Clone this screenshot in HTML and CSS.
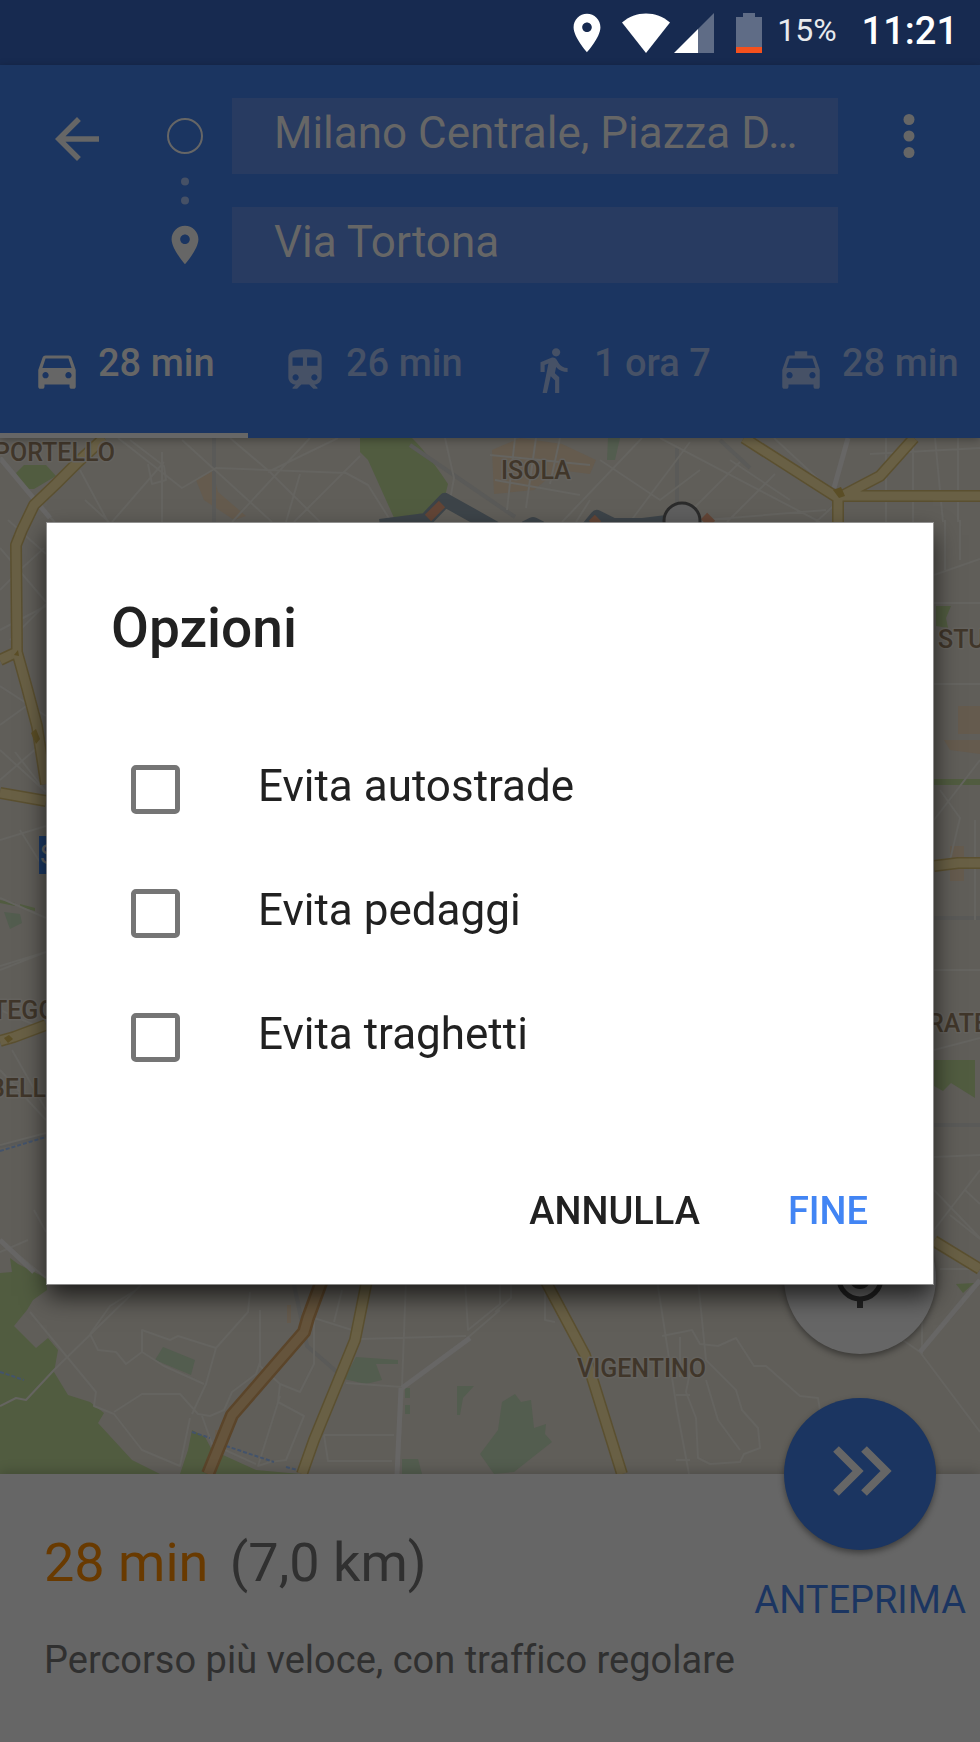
FILE: index.html
```
<!doctype html>
<html lang="it">
    <head>
        <meta charset="utf-8">
        <meta name="viewport" content="width=device-width, initial-scale=1">
        <title>Opzioni</title>
        <link rel="stylesheet" href="styles.css">
    </head>
    <body>
        <div class="app">
            <div class="statusBar">
                <svg class="statusPin" viewBox="0 0 24 24"><path d="M12 2C8.13 2 5 5.13 5 9c0 5.25 7 13 7 13s7-7.75 7-13c0-3.87-3.13-7-7-7zm0 9.5c-1.38 0-2.5-1.12-2.5-2.5s1.12-2.5 2.5-2.5 2.500 1.120 2.500 2.500-1.120 2.500-2.500 2.500z"/></svg>
                <svg class="wifi" viewBox="0 0 48 40"><path d="M24 40L0 9.500C7 3.500 15 .5 24 .5s17 3 24 9z"/></svg>
                <svg class="signal" viewBox="0 0 40 40"><path class="faded" d="M40 0v40H24V16z"/><path d="M24 16v24H0z"/></svg>
                <svg class="battery" viewBox="0 0 26 40"><path class="faded" d="M7 0h12v4h7v30H0V4h7z"/><path class="low" d="M0 34h26v6H0z"/></svg>
                <span class="percent">15%</span>
                <span class="clock">11:21</span>
            </div>

            <header class="header">
                <div class="route">
                    <button class="iconButton back" aria-label="Indietro">
                        <svg viewBox="0 0 24 24"><path d="M20 11H7.83l5.590-5.590L12 4l-8 8 8 8 1.410-1.410L7.830 13H20v-2z"/></svg>
                    </button>
                    <svg class="origin" viewBox="0 0 36 36"><circle cx="18" cy="18" r="17"/></svg>
                    <input class="field" type="text" aria-label="Partenza" value="Milano Centrale, Piazza D…">
                    <button class="iconButton" aria-label="Altre opzioni">
                        <svg viewBox="0 0 24 24"><circle cx="12" cy="6" r="2"/><circle cx="12" cy="12" r="2"/><circle cx="12" cy="18" r="2"/></svg>
                    </button>
                    <svg class="dots" viewBox="0 0 10 28"><circle cx="5" cy="4.500" r="4"/><circle cx="5" cy="23.500" r="4"/></svg>
                    <svg class="destination" viewBox="0 0 24 24"><path d="M12 2C8.130 2 5 5.130 5 9c0 5.250 7 13 7 13s7-7.750 7-13c0-3.870-3.130-7-7-7zm0 9.500c-1.380 0-2.500-1.120-2.500-2.500s1.120-2.500 2.500-2.500 2.500 1.120 2.500 2.500-1.120 2.500-2.500 2.500z"/></svg>
                    <input class="field second" type="text" aria-label="Destinazione" value="Via Tortona">
                </div>

                <nav class="tabs">
                    <a class="tab active" href="#auto">
                        <svg viewBox="0 0 24 24"><path d="M18.92 6.01C18.72 5.42 18.16 5 17.5 5h-11c-.66 0-1.21.42-1.42 1.01L3 12v8c0 .55.45 1 1 1h1c.55 0 1-.45 1-1v-1h12v1c0 .55.45 1 1 1h1c.55 0 1-.45 1-1v-8l-2.08-5.99zM6.5 16c-.83 0-1.5-.67-1.5-1.5S5.67 13 6.5 13s1.5.67 1.5 1.5S7.33 16 6.5 16zm11 0c-.83 0-1.5-.67-1.5-1.5s.67-1.5 1.5-1.5 1.5.67 1.5 1.5-.67 1.5-1.5 1.5zM5 11l1.500-4.500h11L19 11H5z"/></svg>
                        <span>28 min</span>
                    </a>
                    <a class="tab" href="#mezzi">
                        <svg viewBox="0 0 24 24"><path d="M12 2c-4 0-8 .5-8 4v9.500C4 17.430 5.570 19 7.500 19L6 20.500v.5h2.230l2-2H14l2 2h2v-.5L16.500 19c1.930 0 3.500-1.570 3.500-3.500V6c0-3.500-3.580-4-8-4zM7.500 17c-.83 0-1.500-.67-1.500-1.500S6.670 14 7.500 14s1.500.67 1.500 1.500S8.330 17 7.500 17zm3.500-7H6V6h5v4zm2 0V6h5v4h-5zm3.500 7c-.83 0-1.500-.67-1.500-1.500s.67-1.500 1.500-1.500 1.500.67 1.500 1.500-.67 1.500-1.500 1.500z"/></svg>
                        <span>26 min</span>
                    </a>
                    <a class="tab" href="#piedi">
                        <svg viewBox="0 0 24 24"><path d="M13.500 5.500c1.100 0 2-.9 2-2s-.9-2-2-2-2 .9-2 2 .9 2 2 2zM9.800 8.900L7 23h2.100l1.800-8 2.100 2v6h2v-7.500l-2.100-2 .6-3C14.800 12 16.800 13 19 13v-2c-1.900 0-3.500-1-4.300-2.400l-1-1.600c-.4-.6-1-1-1.700-1-.3 0-.5.1-.8.1L6 8.300V13h2V9.600l1.800-.7"/></svg>
                        <span>1 ora 7</span>
                    </a>
                    <a class="tab" href="#taxi">
                        <svg viewBox="0 0 24 24"><path d="M18.920 6.010C18.720 5.420 18.160 5 17.500 5H15V3H9v2H6.500c-.66 0-1.210.42-1.420 1.010L3 12v8c0 .55.45 1 1 1h1c.55 0 1-.45 1-1v-1h12v1c0 .55.45 1 1 1h1c.55 0 1-.45 1-1v-8l-2.080-5.990zM6.500 16c-.83 0-1.500-.67-1.500-1.500S5.670 13 6.500 13s1.500.67 1.500 1.500S7.330 16 6.500 16zm11 0c-.83 0-1.500-.67-1.500-1.500s.67-1.500 1.500-1.500 1.500.67 1.500 1.500-.67 1.500-1.500 1.500zM5 11l1.500-4.500h11L19 11H5z"/></svg>
                        <span>28 min</span>
                    </a>
                </nav>
            </header>

            <main class="map">
                <svg class="tiles" viewBox="0 438 980 1036" preserveAspectRatio="xMidYMid slice">
                    <!-- parks -->
                    <g class="park">
                        <path d="M16 473l8-8h22l10 11-22 13H25z"/>
                        <path d="M360 438h52c16 16 28 34 36 46l-3 12-15 24h-35l-27-60-8-8z"/>
                        <path d="M0 1273l12-1-2-14 8 6 28 14 1 12-14 10-6 10-13 16 22 22 12-10 10 12-4 22 14 23 22 7 14 11-6 10 34 37 28 14H0z"/>
                        <path d="M192 1430l13 7 7 13 44 20 44 4H180l8-24z"/>
                        <path d="M934 1060h41v38l-24-15-8 8-9-5zM936 606h15l-5 12 2 10-12-2zM956 1284l18-1-11 10z"/>
                        <path d="M934 779h46v6h-46zM0 900l15 3v3l-15-3zM20 904l15 4v3l-15-4z"/>
                    </g>
                    <g class="garden">
                        <path d="M163 1347l32 13-4 15-36-15zM356 1357l42 3v4h-22l6 16-16 4-22-5zM457 1386h17l-11 12-3 17h-3zM405 1388h5v10h-5zM405 1405h5v9h-5zM488 1455l12-18v36z"/>
                        <path d="M502 1402l13-8 6 8 10-2 3 28 12-4-1 10 7 8-38 30-20 2-14-20 18-24z"/>
                        <path d="M402 1459h16l4 15h-20zM608 438h12l-5 22h-8zM4 912l16 2 2 9-12 6z"/>
                    </g>
                    <!-- built-up blocks -->
                    <g class="block">
                        <path d="M492 450l28-12 42 6 34 16-6 14-32-4-24 20-40 4zM196 480l16-10 6 22 28 24-12 4-30-20z"/>
                        <path d="M958 706h22v28h-22zM944 740h36v14l-30-4zM950 846h14v35h-14zM287 1305h4v18h-4zM215 1430h9v18h-9z"/>
                    </g>
                    <path class="rail" d="M214 438v84M410 445l70 48M480 493l35 24M720 440l30 28M677 448l0 70M293 1280l14 66 30 26M0 1146l46-10M934 1125h46M934 918h46"/>
                    <!-- minor streets -->
                    <g class="street">
                        <path d="M0 458l46 54 10 12M118 438l64 50 34-20 130 5 22 12 24 38M164 462l-52 60M80 470l28 52M182 440l90 82M162 452v70M130 440l34 26 2 14-14 4-4-20M230 438l40 34 50 50M310 438l-78 84M360 456l-66 66M300 474l-14 48M268 472l70-34M85 500l24 22M445 438l9 40-4 22"/>
                        <path d="M490 455l100 10M515 438l-8 72M536 438l-10 70M495 480l85 15M560 438l-10 46M660 438l160 84M642 438l-80 84M690 442l-60 80M740 462l-60 60M775 474l-48 48M600 460l60 40 40-30M826 510l-120 10M848 438l-14 50M774 438l56 52M870 454l110-6M886 438v84M913 438v84M935 438l8 84M958 438v84M590 500l-14 22M790 500l-60-40M840 500l-24 22"/>
                        <path d="M0 548l46 54M8 520l38 34M0 590l20-20 24-22M0 630l46-24M10 640l36-36M0 686l46 30M0 725l36-26M0 780l46-40M0 750l46 42M15 752l31 40M0 840l46-14M0 970l46-18M20 830l26 42M0 898l46 20M0 966l46-14M12 1050l34 60M0 1070l46 50M0 1145l46-12M0 1010l46 20M34 1210l12 22"/>
                        <path d="M934 575l46-16M945 520v50M960 520v40M934 603h46M934 684h46M940 790l20 28-10 42M980 760l-46 60M975 820v100M934 970h46M934 1050l46-12M934 1157l46-2M934 1190l46 48M934 1230l46-60M950 1215l30 24M965 1190l15 14"/>
                        <path d="M0 1240l46 38M28 1240L0 1252M30 1312l66 80-2 14 20 8 28 36 38 16 10-48M0 1406l16-8 10 2 28-30 88-86M90 1334l20-28 26-16 10-10M142 1352v-22l28 10 8-4 38 12 32-36 2-20M90 1334l8 16 18 2 10 12 16-12 22 14 40 18M216 1348l-10 36-14 30M114 1412l28-18h38l18 20 12 2 14-6 8-18 24-18 4-12V1310M260 1316v50l20 18 20 8 14-28V1310M280 1384l-2 18 26 14-18 44-16 2-12 4 22-70M202 1416l10 28 44 20M314 1318l38 12M342 1290l-8 32"/>
                        <path d="M360 1339l106-3M346 1383l56 4M406 1280l-4 106M465 1280l3 50 32-26v-24M405 1385l60-45 35-30M403 1388l-5 86M324 1435h70M324 1435l4 26h64M495 1312l16-14V1280M545 1290v30l10 2"/>
                        <path d="M657 1280l20 130 12 64M662 1336l30-6 8 14 18 2 18-8 18 28h12l34 30 18 2 2 12M698 1280l8 80 30 30 6 20 16 18 2 20-16 6-4 8-30 2-12-6-2-40-10-26 4-20M706 1380l12 40 22 30M680 1337v40M690 1395h-14M676 1460h14"/>
                        <path d="M980 1282l-60 70-20-14M920 1352l60 80M922 1320v34M940 1269h40"/>
                    </g>
                    <path class="avenue" d="M0 458l50 60M402 1388l68-50M401 1388l-4 86M0 1240l34 32M920 1352l60-72M848 438l-14 50"/>
                    <path class="water" d="M192 1432l18 6M226 1446l48 16M286 1467l12 3M0 1372l24 8M0 1151l46-14"/>
                    <!-- main roads, casing first -->
                    <g class="casing">
                        <path d="M104 438l-26 24-22 22-22 21-12 25-6 15 1 107 10 36 10 38 9 58M0 660l17-8M0 793l46 8M0 1041l14-4 32-12M744 438l94 60 42-22 34-38M838 496h142M838 496v26M934 866l24-3h22M934 1241l46 28"/>
                        <path d="M367 1280l-12 60-41 100-12 34M545 1280l40 75 37 119"/>
                    </g>
                    <g class="road">
                        <path d="M104 438l-26 24-22 22-22 21-12 25-6 15 1 107 10 36 10 38 9 58M0 660l17-8M0 793l46 8M0 1041l14-4 32-12M744 438l94 60 42-22 34-38M838 496h142M838 496v26M934 866l24-3h22M934 1241l46 28"/>
                        <path d="M367 1280l-12 60-41 100-12 34M545 1280l40 75 37 119"/>
                    </g>
                    <path class="junction" d="M833 490l8-3 4 9-6 2zM31 733l5-4 4 10-4 5zM4 1038l5-3 4 4-5 4zM14 655l4-5 1 6z"/>
                    <path class="highwayCasing" d="M322 1280l-14 38-4 14-72 83-24 59"/>
                    <path class="highway" d="M322 1280l-14 38-4 14-72 83-24 59"/>
                    <!-- routes -->
                    <path class="routeLine" d="M380 526l46-6 19-20 50 28M525 528l8-4 8 4M588 528l9-11 16 8h30l32-4"/>
                    <path class="traffic" d="M428 518l14-14M592 524l6-6M704 516l8 8"/>
                    <circle class="marker" cx="682" cy="521" r="18"/>
                    <path class="station" d="M39 836h12v38H39z"/>
                    <text class="stationName" x="40" y="864">S</text>
                    <g class="placeNames">
                        <text x="-6" y="461">PORTELLO</text>
                        <text x="501" y="479">ISOLA</text>
                        <text x="938" y="648">STU</text>
                        <text x="-8" y="1019">TEGG</text>
                        <text x="-11" y="1097">BELL</text>
                        <text x="928" y="1032">RATE</text>
                        <text x="577" y="1377">VIGENTINO</text>
                    </g>
                </svg>
                <button class="fab locate" aria-label="La mia posizione">
                    <svg viewBox="0 0 64 64"><circle class="ring" cx="32" cy="32" r="21"/><circle cx="32" cy="32" r="11"/><path d="M29 2h6v9h-6zM29 53h6v9h-6zM2 29h9v6H2zM53 29h9v6h-9z"/></svg>
                </button>
            </main>

            <section class="sheet">
                <button class="fab preview" aria-labelledby="previewLabel">
                    <svg viewBox="0 0 64 56"><path d="M8 3l22 22L8 47M36 3l22 22-22 22"/></svg>
                </button>
                <div class="summary">
                    <p class="duration"><strong>28 min</strong> <span>(7,0 km)</span></p>
                    <a class="previewLabel" id="previewLabel" href="#anteprima">ANTEPRIMA</a>
                </div>
                <p class="note">Percorso più veloce, con traffico regolare</p>
            </section>
        </div>

        <div class="overlay">
            <form class="dialog" role="dialog" aria-labelledby="dialogTitle">
                <h1 id="dialogTitle">Opzioni</h1>
                <div class="options">
                    <div class="option"><input type="checkbox" id="autostrade"><label for="autostrade">Evita autostrade</label></div>
                    <div class="option"><input type="checkbox" id="pedaggi"><label for="pedaggi">Evita pedaggi</label></div>
                    <div class="option"><input type="checkbox" id="traghetti"><label for="traghetti">Evita traghetti</label></div>
                </div>
                <div class="actions">
                    <button type="button">ANNULLA</button>
                    <button type="button" class="primary">FINE</button>
                </div>
            </form>
        </div>
    </body>
</html>
```

FILE: styles.css
```
* {
    box-sizing: border-box;
}
body {
    margin: 0;
    font-family: Roboto, "Noto Sans", sans-serif;
    font-size: 38px;
    color: #303030;
    background-color: #666;
}
button {
    font: inherit;
    border: 0;
    background: none;
    padding: 0;
    cursor: pointer;
}
a {
    text-decoration: none;
}
p, h1 {
    margin: 0;
}
svg {
    display: block;
    flex-shrink: 0;
    fill: currentColor;
}

.app {
    display: flex;
    flex-direction: column;
    min-height: 100vh;
}

.statusBar {
    display: flex;
    align-items: center;
    justify-content: flex-end;
    height: 65px;
    padding: 0 22px 0 0;
    color: #fff;
    background-color: #172a50;
}
.statusPin {
    width: 46px;
    height: 46px;
    margin-right: 12px;
}
.wifi {
    width: 48px;
    height: 40px;
    margin-right: 4px;
}
.signal {
    width: 40px;
    height: 40px;
    margin-right: 22px;
}
.battery {
    width: 26px;
    height: 40px;
    margin-right: 15px;
}
.faded {
    fill: #5f6c86;
}
.low {
    fill: #f4511e;
}
.percent {
    font-size: 32px;
    padding-bottom: 6px;
    margin-right: 25px;
    color: #e8eaee;
}
.clock {
    font-weight: 500;
    padding-bottom: 4px;
}

.header {
    color: #666;
    background-color: #1b3561;
    position: relative;
    z-index: 1;
    box-shadow: 0 2px 8px rgba(0, 0, 0, 0.3);
}
.route {
    display: grid;
    grid-template-columns: 154px 62px 1fr 142px;
    grid-template-rows: 76px 33px 76px;
    align-items: center;
    justify-items: center;
    padding-top: 33px;
}
.iconButton {
    color: inherit;
}
.iconButton svg {
    width: 66px;
    height: 66px;
}
.back {
    padding-top: 6px;
}
.origin {
    width: 36px;
    height: 36px;
    fill: none;
    stroke: #666;
    stroke-width: 2;
}
.dots {
    grid-area: 2 / 2;
    width: 10px;
    height: 28px;
    color: #465166;
}
.destination {
    grid-area: 3 / 2;
    width: 46px;
    height: 46px;
}
.field {
    width: calc(100% - 16px);
    height: 100%;
    margin-left: 16px;
    border: 0;
    border-radius: 0;
    padding: 0 40px 7px 42px;
    font: inherit;
    font-size: 44px;
    color: #666;
    background-color: #283b61;
}
.second {
    grid-area: 3 / 3;
}

.tabs {
    display: flex;
    margin-top: 13px;
    overflow: hidden;
}
.tab {
    display: flex;
    flex: 0 0 248px;
    align-items: center;
    gap: 16px;
    height: 142px;
    padding: 0 0 5px 32px;
    border-bottom: 5px solid transparent;
    font-weight: 500;
    white-space: nowrap;
    color: #465166;
}
.tab svg {
    width: 50px;
    height: 50px;
    margin-top: 16px;
}
.tab span {
    padding-top: 2px;
}
.active {
    color: #666;
    border-bottom-color: #666;
}

.map {
    flex: 1;
    position: relative;
    overflow: hidden;
    background-color: #605e59;
}
.tiles {
    position: absolute;
    top: 0;
    left: 0;
    width: 100%;
    height: 100%;
    fill: none;
    stroke-linejoin: round;
}
.park { fill: #515c40; }
.garden { fill: #535d4f; }
.block { fill: #655b4e; }
.rail {
    stroke: #5a5a58;
    stroke-width: 4;
}
.street {
    stroke: #656460;
    stroke-width: 2;
}
.avenue {
    stroke: #676665;
    stroke-width: 5;
}
.water {
    stroke: #43536b;
    stroke-width: 2;
    stroke-dasharray: 4 2;
}
.casing {
    stroke: #5b5030;
    stroke-width: 12;
}
.road {
    stroke: #696045;
    stroke-width: 9;
}
.junction {
    fill: #5b4e26;
}
.highwayCasing {
    stroke: #5b452a;
    stroke-width: 14;
}
.highway {
    stroke: #65543c;
    stroke-width: 9;
}
.routeLine {
    stroke: #3d4449;
    stroke-width: 14;
}
.traffic {
    stroke: #634536;
    stroke-width: 9;
}
.marker {
    fill: #5f5f5f;
    stroke: #2b2b2b;
    stroke-width: 3;
}
.station {
    fill: #1c3a66;
}
.stationName {
    fill: #666;
    font-size: 28px;
}
.placeNames {
    fill: #40362a;
    stroke: #64625e;
    stroke-width: 3;
    paint-order: stroke;
    font-size: 25px;
    font-weight: 500;
}

.fab {
    position: absolute;
    right: 44px;
    display: flex;
    align-items: center;
    justify-content: center;
    width: 152px;
    height: 152px;
    border-radius: 50%;
    box-shadow: 0 3px 6px rgba(0, 0, 0, 0.4);
}
.locate {
    bottom: 120px;
    color: #222;
    background-color: #666;
}
.locate svg {
    width: 64px;
    height: 64px;
}
.ring {
    fill: none;
    stroke: #222;
    stroke-width: 5;
}
.preview {
    top: -76px;
    background-color: #1b3561;
}
.preview svg {
    width: 64px;
    height: 56px;
    fill: none;
    stroke: #666;
    stroke-width: 8;
}

.sheet {
    position: relative;
    height: 268px;
    padding: 57px 14px 0 44px;
    background-color: #666;
    box-shadow: 0 -2px 12px rgba(0, 0, 0, 0.2);
}
.summary {
    display: flex;
    justify-content: space-between;
}
.duration {
    font-size: 54px;
    line-height: 64px;
}
.duration strong {
    font-weight: 400;
    color: #693a00;
    margin-right: 8px;
}
.previewLabel {
    line-height: 44px;
    padding-top: 47px;
    color: #1b3561;
}
.note {
    line-height: 44px;
    margin-top: 16px;
    font-variant-ligatures: none;
}

.overlay {
    position: fixed;
    inset: 0;
    z-index: 2;
    display: flex;
    align-items: center;
    padding: 65px 47px 0;
}
.dialog {
    flex: 1;
    padding-top: 73px;
    color: #212121;
    background-color: #fff;
    box-shadow: 0 0 0 1px rgba(160, 160, 160, 0.8), 0 12px 24px rgba(0, 0, 0, 0.7);
}
.dialog h1 {
    padding-left: 64px;
    font-size: 55px;
    line-height: 64px;
    font-weight: 500;
}
.options {
    margin-top: 67px;
    padding-left: 84px;
}
.option {
    display: flex;
    align-items: center;
    gap: 78px;
    height: 124px;
}
.option input {
    appearance: none;
    width: 49px;
    height: 49px;
    margin: 0;
    border: 5px solid #757575;
    border-radius: 5px;
}
.option input:checked {
    background-color: #4285f4;
}
.option label {
    font-size: 44px;
    padding-bottom: 6px;
}
.actions {
    display: flex;
    justify-content: flex-end;
    gap: 40px;
    margin-top: 68px;
    padding: 0 41px 29px 0;
}
.actions button {
    height: 88px;
    padding: 0 24px;
    font-weight: 500;
    color: #212121;
}
.actions .primary {
    color: #4285f4;
}
```
